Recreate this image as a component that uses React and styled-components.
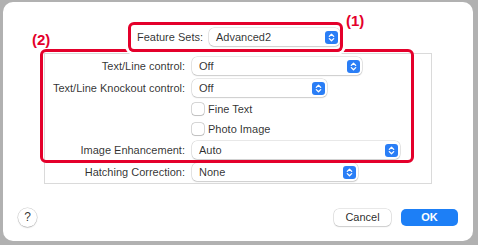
import React from 'react'
import styled, { createGlobalStyle } from 'styled-components'

const Global = createGlobalStyle`
  html, body { margin: 0; padding: 0; }
  body { font-family: "Liberation Sans", Arial, sans-serif; }
  * { box-sizing: border-box; }
`

const RED = '#e4002b'

const Page = styled.div`
  width: 478px;
  height: 245px;
  background: #b1b1b1;
  padding: 2px 5px 4px 3px;
  display: flex;
`
const Dialog = styled.div`
  flex: 1;
  background: #fff;
  border-radius: 10px;
  padding: 25px 15px 14px;
  display: flex;
  flex-direction: column;
  color: rgba(0, 0, 0, 0.82);
  font-size: 11px;
`
const Header = styled.div`
  display: flex;
  justify-content: center;
  margin-bottom: 6px;
  position: relative;
  z-index: 2;
`
const FeatureRow = styled.div`
  position: relative;
  display: flex;
  align-items: center;
  gap: 6px;
  height: 20px;
  padding-left: 1px;
`
const Mark = styled.div`
  position: absolute;
  border: 3px solid ${RED};
  border-radius: 6px;
  pointer-events: none;
`
const MarkOne = styled(Mark)`
  left: -8px;
  right: -3px;
  top: -5px;
  bottom: -5px;
  box-shadow: 0 0 0 3px #fff;
`
const MarkTwo = styled(Mark)`
  left: -5px;
  top: -5px;
  width: 374px;
  height: 114px;
  z-index: 1;
`
const MarkLabel = styled.span`
  position: absolute;
  color: ${RED};
  font-weight: bold;
  font-size: 15px;
  line-height: 17px;
  left: ${({ $left }) => $left};
  top: ${({ $top }) => $top};
  white-space: nowrap;
`
const Group = styled.div`
  position: relative;
  margin: 0 26px;
  border: 1px solid #dadada;
  padding: 1px 0 0 3px;
`
const Row = styled.div`
  display: grid;
  grid-template-columns: 137px 1fr;
  column-gap: 7px;
  align-items: center;
  height: ${({ $h }) => $h}px;
`
const Label = styled.span`
  text-align: right;
  white-space: nowrap;
`
const Popup = styled.div`
  width: ${({ $w }) => $w}px;
  height: 18px;
  display: flex;
  align-items: center;
  justify-content: space-between;
  padding: 0 2px 0 7px;
  background: #fff;
  border-radius: 5px;
  box-shadow: 0 0 0 0.5px rgba(0, 0, 0, 0.18), 0 1px 1.5px rgba(0, 0, 0, 0.12);
`
const Check = styled.label`
  grid-column: 2;
  display: flex;
  align-items: center;
  gap: 4px;
`
const Box = styled.span`
  width: 12px;
  height: 12px;
  border-radius: 3px;
  background: #fff;
  box-shadow: 0 0 0 0.5px rgba(0, 0, 0, 0.3), 0 0.5px 1px rgba(0, 0, 0, 0.12);
`
const Footer = styled.div`
  margin-top: auto;
  height: 20px;
  display: flex;
  align-items: center;
  gap: 10px;
`
const Help = styled.div`
  width: 19px;
  height: 19px;
  border-radius: 50%;
  background: #fff;
  box-shadow: 0 0 0 0.5px rgba(0, 0, 0, 0.2), 0 1px 1.5px rgba(0, 0, 0, 0.15);
  display: flex;
  align-items: center;
  justify-content: center;
  font-size: 12px;
  margin-right: auto;
`
const Button = styled.div`
  width: 57px;
  height: 17px;
  border-radius: 5px;
  display: flex;
  align-items: center;
  justify-content: center;
  background: ${({ $primary }) => ($primary ? '#1d7ff6' : '#fff')};
  color: ${({ $primary }) => ($primary ? '#fff' : 'rgba(0,0,0,0.85)')};
  font-weight: ${({ $primary }) => ($primary ? 'bold' : 'normal')};
  box-shadow: ${({ $primary }) =>
    $primary ? 'none' : '0 0 0 0.5px rgba(0,0,0,0.18), 0 1px 1.5px rgba(0,0,0,0.12)'};
`

const Stepper = () => (
  <svg width="13" height="13" viewBox="0 0 13 13">
    <rect width="13" height="13" rx="3" fill="#2a7ef6" />
    <path d="M4.3 5.4 L6.5 3.3 L8.7 5.4 M4.3 7.6 L6.5 9.7 L8.7 7.6" fill="none" stroke="#fff" strokeWidth="1.3" strokeLinecap="round" strokeLinejoin="round" />
  </svg>
)

const Select = ({ value, w }) => (
  <Popup $w={w}>
    <span>{value}</span>
    <Stepper />
  </Popup>
)

export default function App() {
  return (
    <>
      <Global />
      <Page>
        <Dialog>
          <Header>
            <FeatureRow>
              <Label>Feature Sets:</Label>
              <Select value="Advanced2" w={131} />
              <MarkOne>
                <MarkLabel $left="calc(100% + 6px)" $top="-13px">(1)</MarkLabel>
              </MarkOne>
            </FeatureRow>
          </Header>
          <Group>
            <MarkTwo>
              <MarkLabel $left="-11px" $top="-21px">(2)</MarkLabel>
            </MarkTwo>
            <Row $h={22}>
              <Label>Text/Line control:</Label>
              <Select value="Off" w={170} />
            </Row>
            <Row $h={22}>
              <Label>Text/Line Knockout control:</Label>
              <Select value="Off" w={135} />
            </Row>
            <Row $h={20}>
              <Check><Box />Fine Text</Check>
            </Row>
            <Row $h={20}>
              <Check><Box />Photo Image</Check>
            </Row>
            <Row $h={22}>
              <Label>Image Enhancement:</Label>
              <Select value="Auto" w={208} />
            </Row>
            <Row $h={22}>
              <Label>Hatching Correction:</Label>
              <Select value="None" w={166} />
            </Row>
          </Group>
          <Footer>
            <Help>?</Help>
            <Button>Cancel</Button>
            <Button $primary>OK</Button>
          </Footer>
        </Dialog>
      </Page>
    </>
  )
}
